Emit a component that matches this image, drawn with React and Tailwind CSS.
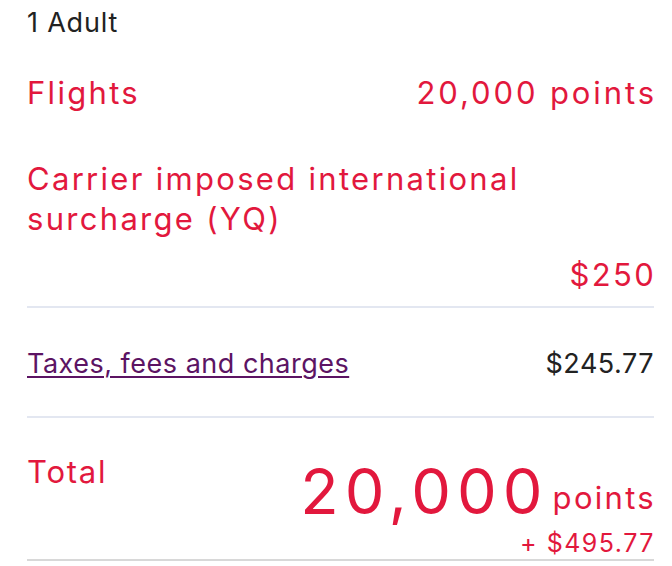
export default function App() {
    return (
        <div className="w-[672px] h-[566px] bg-white pl-[27px] pr-[18px] font-['Inter',sans-serif] overflow-hidden">
            <div className="pt-[9px] text-[27px] leading-[27px] tracking-[0.8px] text-[#222]">1 Adult</div>

            <div className="mt-[41px] flex items-baseline justify-between text-[31px] leading-[31px] tracking-[2.3px] text-[#e2183d]">
                <span>Flights</span>
                <span className="tracking-[2.9px] mr-[-3px]">20,000 points</span>
            </div>

            <div className="mt-[51px] max-w-[560px] text-[31px] leading-[40px] tracking-[2.3px] text-[#e2183d]">
                Carrier imposed international surcharge (YQ)
            </div>
            <div className="mt-[20px] text-right text-[31px] leading-[31px] tracking-[2.3px] text-[#e2183d] mr-[-2px]">$250</div>

            <div className="mt-[16px] border-t-2 border-[#e3e7f1]"></div>

            <div className="h-[108px] pt-[42px] flex items-start justify-between text-[27px] leading-[27px]">
                <a href="#" className="text-[#5c1463] tracking-[0.5px] underline underline-offset-[3px] decoration-[1.5px]">Taxes, fees and charges</a>
                <span className="text-[#222] tracking-[0.5px]">$245.77</span>
            </div>

            <div className="border-t-2 border-[#e3e7f1]"></div>

            <div className="mt-[38px] flex items-start justify-between text-[#e2183d]">
                <span className="text-[31px] leading-[31px] tracking-[1.8px]">Total</span>
                <div className="pt-[4px] flex flex-col items-end">
                    <div className="flex items-baseline gap-[10px]">
                        <span className="text-[63px] leading-[63px] tracking-[6px] mr-[-6px]">20,000</span>
                        <span className="relative top-[-5px] text-[31px] leading-[31px] tracking-[2.3px] mr-[-2px]">points</span>
                    </div>
                    <span className="mt-[8px] text-[25px] leading-[25px] tracking-[1.5px] mr-[-1px]">+ $495.77</span>
                </div>
            </div>

            <div className="mt-[3px] border-t-2 border-[#d8d8d8]"></div>
        </div>
    );
}
